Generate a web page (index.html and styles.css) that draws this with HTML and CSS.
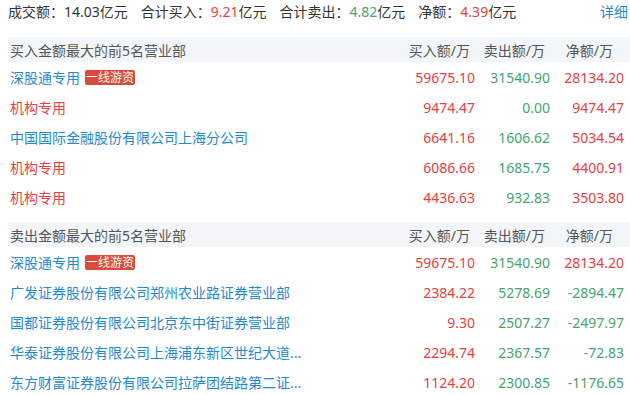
FILE: index.html
```html
<!DOCTYPE html>
<html lang="zh-CN">
<head>
<meta charset="utf-8">
<link rel="stylesheet" href="styles.css">
</head>
<body>
<div class="page">
  <div class="summary">
    <span class="item">成交额：<span class="num">14.03</span>亿元</span>
    <span class="item">合计买入：<span class="num up">9.21</span>亿元</span>
    <span class="item">合计卖出：<span class="num down">4.82</span>亿元</span>
    <span class="item">净额：<span class="num up">4.39</span>亿元</span>
    <a class="more">详细</a>
  </div>

  <div class="section">
    <div class="row head">
      <div class="name">买入金额最大的前5名营业部</div>
      <div class="col h1">买入额/万</div>
      <div class="col h2">卖出额/万</div>
      <div class="col h3">净额/万</div>
    </div>
    <div class="row">
      <div class="name blue">深股通专用<span class="tag">一线游资</span></div>
      <div class="col up">59675.10</div>
      <div class="col down">31540.90</div>
      <div class="col up">28134.20</div>
    </div>
    <div class="row">
      <div class="name red">机构专用</div>
      <div class="col up">9474.47</div>
      <div class="col down">0.00</div>
      <div class="col up">9474.47</div>
    </div>
    <div class="row">
      <div class="name blue">中国国际金融股份有限公司上海分公司</div>
      <div class="col up">6641.16</div>
      <div class="col down">1606.62</div>
      <div class="col up">5034.54</div>
    </div>
    <div class="row">
      <div class="name red">机构专用</div>
      <div class="col up">6086.66</div>
      <div class="col down">1685.75</div>
      <div class="col up">4400.91</div>
    </div>
    <div class="row">
      <div class="name red">机构专用</div>
      <div class="col up">4436.63</div>
      <div class="col down">932.83</div>
      <div class="col up">3503.80</div>
    </div>
  </div>

  <div class="section second">
    <div class="row head">
      <div class="name">卖出金额最大的前5名营业部</div>
      <div class="col h1">买入额/万</div>
      <div class="col h2">卖出额/万</div>
      <div class="col h3">净额/万</div>
    </div>
    <div class="row">
      <div class="name blue">深股通专用<span class="tag">一线游资</span></div>
      <div class="col up">59675.10</div>
      <div class="col down">31540.90</div>
      <div class="col up">28134.20</div>
    </div>
    <div class="row">
      <div class="name blue">广发证券股份有限公司郑州农业路证券营业部</div>
      <div class="col up">2384.22</div>
      <div class="col down">5278.69</div>
      <div class="col down">-2894.47</div>
    </div>
    <div class="row">
      <div class="name blue">国都证券股份有限公司北京东中街证券营业部</div>
      <div class="col up">9.30</div>
      <div class="col down">2507.27</div>
      <div class="col down">-2497.97</div>
    </div>
    <div class="row">
      <div class="name blue">华泰证券股份有限公司上海浦东新区世纪大道...</div>
      <div class="col up">2294.74</div>
      <div class="col down">2367.57</div>
      <div class="col down">-72.83</div>
    </div>
    <div class="row">
      <div class="name blue">东方财富证券股份有限公司拉萨团结路第二证...</div>
      <div class="col up">1124.20</div>
      <div class="col down">2300.85</div>
      <div class="col down">-1176.65</div>
    </div>
  </div>
</div>
</body>
</html>
```

FILE: styles.css
```css
html, body {
  margin: 0;
  padding: 0;
  background: #ffffff;
}

body {
  font-family: "Noto Sans", "Noto Sans CJK SC", sans-serif;
  font-size: 14px;
  color: #333333;
  overflow: hidden;
}

.page {
  padding-left: 8px;
  width: 622px;
}

.summary {
  display: flex;
  align-items: center;
  height: 24px;
  line-height: 24px;
  margin-bottom: 13px;
  padding-right: 2px;
  font-size: 14px;
  color: #333333;
}

.summary .item {
  margin-right: 13px;
  white-space: nowrap;
}

.summary .more {
  margin-left: auto;
  color: #1f8ad2;
  cursor: pointer;
}

.up { color: #e8413f; }
.down { color: #45a56f; }
.blue { color: #1f8ad2; }
.red { color: #e8413f; }

.section.second {
  margin-top: 10px;
}

.row {
  display: grid;
  grid-template-columns: 1fr 75px 75px 74px;
  align-items: center;
  height: 30px;
  padding-left: 2px;
  padding-right: 6px;
  white-space: nowrap;
}

.row.head {
  height: 25px;
  background: #f3f6f9;
  color: #555555;
}

.name {
  display: flex;
  align-items: center;
  overflow: hidden;
}

.col {
  text-align: right;
}

.head .h1 { padding-right: 5px; }
.head .h2 { padding-right: 5px; }
.head .h3 { padding-right: 11px; }

.tag {
  display: inline-block;
  margin-left: 5px;
  height: 15px;
  line-height: 15px;
  padding: 0 1px;
  font-size: 12px;
  color: #ffffff;
  background: #dc4a38;
  border-radius: 2px;
}
```
